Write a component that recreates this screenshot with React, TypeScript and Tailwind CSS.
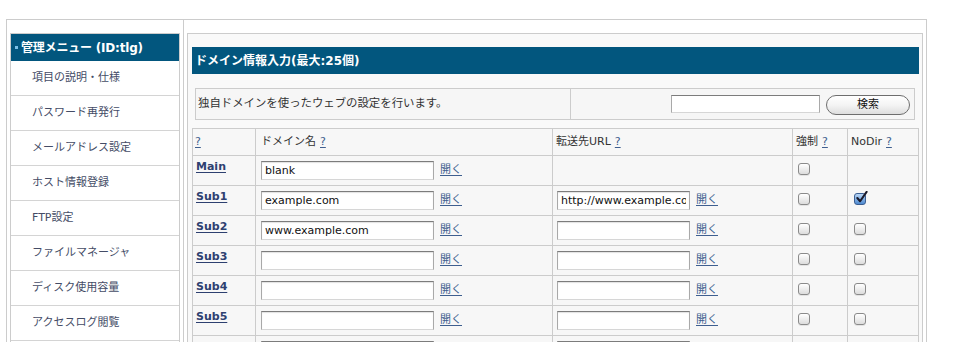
import React from "react";

const FONT = '"DejaVu Sans", "Noto Sans CJK JP", sans-serif';

const menu = [
  "項目の説明・仕様",
  "パスワード再発行",
  "メールアドレス設定",
  "ホスト情報登録",
  "FTP設定",
  "ファイルマネージャ",
  "ディスク使用容量",
  "アクセスログ閲覧",
  "",
];

type Row = { label: string; domain: string; url: string | null; force: boolean; nodir: boolean | null; link: boolean };

const rows: Row[] = [
  { label: "Main", domain: "blank", url: null, force: false, nodir: null, link: true },
  { label: "Sub1", domain: "example.com", url: "http://www.example.com", force: false, nodir: true, link: true },
  { label: "Sub2", domain: "www.example.com", url: "", force: false, nodir: false, link: true },
  { label: "Sub3", domain: "", url: "", force: false, nodir: false, link: true },
  { label: "Sub4", domain: "", url: "", force: false, nodir: false, link: true },
  { label: "Sub5", domain: "", url: "", force: false, nodir: false, link: true },
  { label: "", domain: "", url: "", force: false, nodir: false, link: false },
];

function TextBox({ value, w }: { value: string; w: string }) {
  return (
    <input
      type="text"
      defaultValue={value}
      className={`${w} h-[19px] shrink-0 bg-white px-[3px] text-[11px] text-[#111] border border-[#a9a9a9] border-t-[#7c7c7c] border-b-[#d6d6d6] shadow-[inset_0_1px_1px_rgba(0,0,0,0.12)] outline-none`}
      style={{ fontFamily: FONT }}
    />
  );
}

function Check({ checked }: { checked: boolean }) {
  if (checked) {
    return (
      <div className="relative w-[12px] h-[12px] rounded-[3px] border border-[#3b5f93] bg-gradient-to-b from-[#b9d6f5] to-[#4e8ad0]">
        <svg viewBox="0 0 14 14" className="absolute left-[0px] top-[-3px] w-[13px] h-[13px]">
          <path d="M2.5 7.5 L5.5 11 L12.5 1" fill="none" stroke="#1a1a2a" strokeWidth="2.2" strokeLinecap="round" strokeLinejoin="round" />
        </svg>
      </div>
    );
  }
  return (
    <div className="w-[12px] h-[12px] rounded-[3px] border border-[#8a8a8a] bg-gradient-to-b from-white to-[#dcdcdc] shadow-[0_1px_0_rgba(0,0,0,0.08)]" />
  );
}

function Open() {
  return <span className="text-[11px] text-[#3f5f8f] underline underline-offset-2 shrink-0">開く</span>;
}

function Q() {
  return <span className="text-[#3f5f8f] underline underline-offset-2">?</span>;
}

export default function App() {
  return (
    <div className="min-h-screen bg-white text-[#333]" style={{ fontFamily: FONT }}>
      <div className="pt-[19px] pl-[6px]">
        <div className="w-[921px] h-[420px] flex border-t border-l border-r border-[#cccccc]">
          {/* Left column */}
          <div className="w-[177px] shrink-0 border-r border-[#cccccc] pt-[13px] px-[3px]">
            <div className="w-[170px] border border-[#cccccc] bg-white">
              <div className="h-[27px] bg-[#02567e] flex items-center pl-[4px]">
                <span className="w-[3px] h-[3px] bg-[#7bc0e8] mr-[3px]" />
                <span className="text-white font-bold text-[12px] leading-none tracking-[-0.2px]">管理メニュー (ID:tlg)</span>
              </div>
              {menu.map((m, i) => (
                <div key={i} className="h-[35px] border-b border-[#d4d4d4] flex items-center pl-[21px] text-[11px] text-[#444c66]">
                  {m}
                </div>
              ))}
            </div>
          </div>

          {/* Right column */}
          <div className="flex-1 pt-[13px] px-[3px]">
            <div className="w-[736px] h-[400px] border border-[#cccccc] bg-[#f9f9f9] pt-[13px] pl-[4px] pr-[3px]">
              <div className="h-[27px] bg-[#02567e] flex items-center pl-[3px]">
                <span className="text-white font-bold text-[12px] leading-none">ドメイン情報入力(最大:25個)</span>
              </div>

              <div className="mt-[14px] ml-[3px] w-[720px] h-[32px] border border-[#cccccc] bg-[#f6f6f6] flex">
                <div className="w-[375px] border-r border-[#cccccc] flex items-center pl-[2px] text-[11.4px] text-[#333]">
                  独自ドメインを使ったウェブの設定を行います。
                </div>
                <div className="flex-1 flex items-center justify-end gap-[6px] pr-[4px]">
                  <input
                    type="text"
                    className="w-[149px] h-[18px] bg-white border border-[#a9a9a9] border-t-[#7c7c7c] border-b-[#d6d6d6] outline-none"
                  />
                  <button className="w-[84px] h-[20px] mt-[2px] rounded-full border border-[#6e6e6e] bg-gradient-to-b from-white via-[#f4f4f4] to-[#dedede] text-[11px] text-[#111] flex items-center justify-center">
                    検索
                  </button>
                </div>
              </div>

              <div className="mt-[8px] w-[727px] grid grid-cols-[62px_296px_239px_54px_70px] gap-px bg-[#cccccc] border border-[#cccccc] text-[11px]">
                <div className="h-[26px] bg-[#f7f7f7] flex items-center pl-[2px]"><Q /></div>
                <div className="h-[26px] bg-[#f7f7f7] flex items-center pl-[5px] gap-[4px]"><span>ドメイン名</span><Q /></div>
                <div className="h-[26px] bg-[#f7f7f7] flex items-center pl-[3px] gap-[4px]"><span>転送先URL</span><Q /></div>
                <div className="h-[26px] bg-[#f7f7f7] flex items-center pl-[3px] gap-[4px]"><span>強制</span><Q /></div>
                <div className="h-[26px] bg-[#f7f7f7] flex items-center pl-[3px] gap-[4px]"><span>NoDir</span><Q /></div>

                {rows.map((r, i) => (
                  <React.Fragment key={i}>
                    <div className="h-[29px] bg-[#f7f7f7] pl-[3px] pt-[3px]">
                      {r.label && (
                        <span className="font-bold text-[11px] leading-[16px] text-[#2d4070] underline underline-offset-2">{r.label}</span>
                      )}
                    </div>
                    <div className="h-[29px] bg-[#f7f7f7] flex items-center pl-[5px] gap-[6px]">
                      <TextBox value={r.domain} w="w-[173px]" />
                      {r.link && <Open />}
                    </div>
                    <div className="h-[29px] bg-[#f7f7f7] flex items-center pl-[4px] gap-[6px]">
                      {r.url !== null && (
                        <>
                          <TextBox value={r.url} w="w-[133px]" />
                          {r.link && <Open />}
                        </>
                      )}
                    </div>
                    <div className="h-[29px] bg-[#f7f7f7] pl-[5px] pt-[7px]">
                      <Check checked={r.force} />
                    </div>
                    <div className="h-[29px] bg-[#f7f7f7] pl-[6px] pt-[7px]">
                      {r.nodir !== null && <Check checked={r.nodir} />}
                    </div>
                  </React.Fragment>
                ))}
              </div>
            </div>
          </div>
        </div>
      </div>
    </div>
  );
}
